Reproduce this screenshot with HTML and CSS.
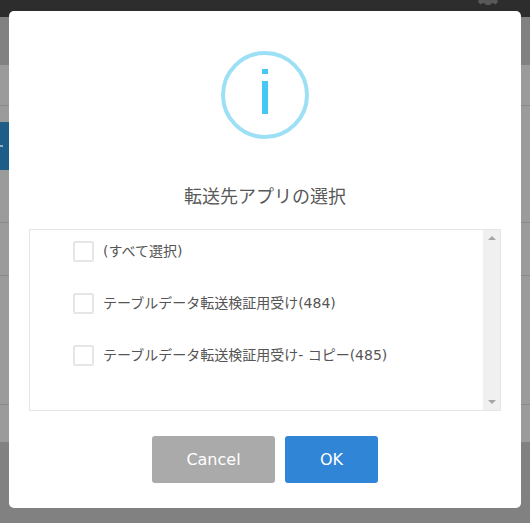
FILE: index.html
```html
<!DOCTYPE html>
<html lang="ja">
  <head>
    <meta charset="utf-8" />
    <title>転送先アプリの選択</title>
    <link rel="stylesheet" href="styles.css">
  </head>
  <body>
    <div class="page">
      <div class="page-header">
        <svg class="page-gear" viewBox="0 0 24 24" width="24" height="24">
          <path d="M10 1h4l.6 3 2.2.9 2.6-1.7 2.8 2.8-1.7 2.6.9 2.2 3 .6v4l-3 .6-.9 2.2 1.7 2.6-2.8 2.8-2.6-1.7-2.2.9-.6 3h-4l-.6-3-2.2-.9-2.6 1.7-2.8-2.8 1.7-2.6-.9-2.2-3-.6v-4l3-.6.9-2.2-1.7-2.6 2.8-2.8 2.6 1.7 2.2-.9z"/>
        </svg>
      </div>
      <div class="page-toolbar"></div>
      <div class="page-row page-row-first"></div>
      <div class="page-row page-row-active">
        <div class="page-row-tab"><span class="page-row-arrow"></span></div>
      </div>
      <div class="page-row page-row-second"></div>
      <div class="page-row page-row-third"></div>
      <div class="page-row page-row-fourth"></div>
      <div class="page-row page-row-end"></div>
      <div class="page-footer"></div>
    </div>

    <div class="dialog">
      <div class="dialog-icon"><span class="dialog-icon-dot"></span><span class="dialog-icon-stem"></span></div>
      <h2 class="dialog-title">転送先アプリの選択</h2>
      <div class="app-list">
        <div class="app-list-items">
          <label class="app-item"><span class="app-check"></span>(すべて選択)</label>
          <label class="app-item"><span class="app-check"></span>テーブルデータ転送検証用受け(484)</label>
          <label class="app-item"><span class="app-check"></span>テーブルデータ転送検証用受け- コピー(485)</label>
        </div>
        <div class="app-scrollbar">
          <span class="arrow-up"></span>
          <span class="arrow-down"></span>
        </div>
      </div>
      <div class="dialog-buttons">
        <button class="btn btn-cancel">Cancel</button>
        <button class="btn btn-ok">OK</button>
      </div>
    </div>
  </body>
</html>
```
FILE: styles.css
```css
html, body {
    margin: 0;
    padding: 0;
    height: 100%;
    overflow: hidden;
    background-color: #808180;
    font-family: "DejaVu Sans", "Noto Sans CJK JP", sans-serif;
}

.page {
    display: flex;
    flex-direction: column;
    height: 523px;
}
.page-header {
    display: flex;
    justify-content: flex-end;
    height: 17px;
    padding-right: 30px;
    overflow: hidden;
    background-color: #2d2d2d;
}
.page-gear {
    margin-top: -19px;
    fill: #585858;
}
.page-toolbar {
    height: 48px;
    background-color: #808180;
}
.page-row {
    flex: none;
    box-sizing: border-box;
    background-color: #9b9b9b;
}
.page-row-first {
    height: 41px;
    border-bottom: 1px solid #8a8a8a;
}
.page-row-active {
    height: 64px;
    padding-top: 16px;
}
.page-row-tab {
    display: flex;
    align-items: center;
    width: 40px;
    height: 48px;
    background-color: #1e5d88;
}
.page-row-arrow {
    width: 3px;
    height: 2px;
    background-color: #8fb0c6;
}
.page-row-second {
    height: 53px;
    border-bottom: 1px solid #8a8a8a;
}
.page-row-third {
    height: 53px;
    border-bottom: 1px solid #8a8a8a;
}
.page-row-fourth {
    height: 129px;
    border-bottom: 1px solid #8a8a8a;
}
.page-row-end {
    height: 37px;
}
.page-footer {
    flex: 1;
    background-color: #808180;
}

.dialog {
    position: absolute;
    top: 11px;
    left: 9px;
    box-sizing: border-box;
    width: 512px;
    height: 497px;
    padding: 40px 20px 0;
    border-radius: 5px;
    background-color: #fff;
}
.dialog-icon {
    position: relative;
    box-sizing: border-box;
    width: 88px;
    height: 88px;
    margin: 0 auto;
    border: 4px solid #9de0f6;
    border-radius: 50%;
}
.dialog-icon-dot, .dialog-icon-stem {
    position: absolute;
    left: 37px;
    width: 6px;
    background-color: #46c8f5;
}
.dialog-icon-dot {
    top: 14px;
    height: 5px;
}
.dialog-icon-stem {
    top: 26px;
    height: 33px;
}
.dialog-title {
    margin: 46px 0 0;
    color: #595959;
    font-size: 18px;
    font-weight: normal;
    line-height: 24px;
    text-align: center;
}

.app-list {
    display: flex;
    box-sizing: border-box;
    height: 182px;
    margin-top: 20px;
    border: 1px solid #e5e5e5;
}
.app-list-items {
    display: flex;
    flex-direction: column;
    flex: 1;
    gap: 31px;
    padding: 11px 0 0 43px;
}
.app-item {
    display: flex;
    align-items: flex-start;
    height: 21px;
    color: #555;
    font-size: 14px;
    line-height: 20px;
}
.app-check {
    box-sizing: border-box;
    width: 21px;
    height: 21px;
    margin-right: 9px;
    border: 2px solid #e6e6e6;
    border-radius: 2px;
}
.app-scrollbar {
    display: flex;
    flex-direction: column;
    justify-content: space-between;
    align-items: center;
    box-sizing: border-box;
    width: 17px;
    padding: 6px 0;
    background-color: #f0f0f0;
}
.arrow-up, .arrow-down {
    width: 0;
    height: 0;
    border-left: 4px solid transparent;
    border-right: 4px solid transparent;
}
.arrow-up {
    border-bottom: 4px solid #a6a6a6;
}
.arrow-down {
    border-top: 4px solid #a6a6a6;
}

.dialog-buttons {
    display: flex;
    justify-content: center;
    gap: 10px;
    margin-top: 25px;
}
.btn {
    height: 47px;
    padding: 0;
    border: 0;
    border-radius: 3px;
    color: #fff;
    font-family: inherit;
    font-size: 16px;
}
.btn-cancel {
    width: 123px;
    background-color: #aaaaaa;
}
.btn-ok {
    width: 93px;
    background-color: #3085d6;
}
```
